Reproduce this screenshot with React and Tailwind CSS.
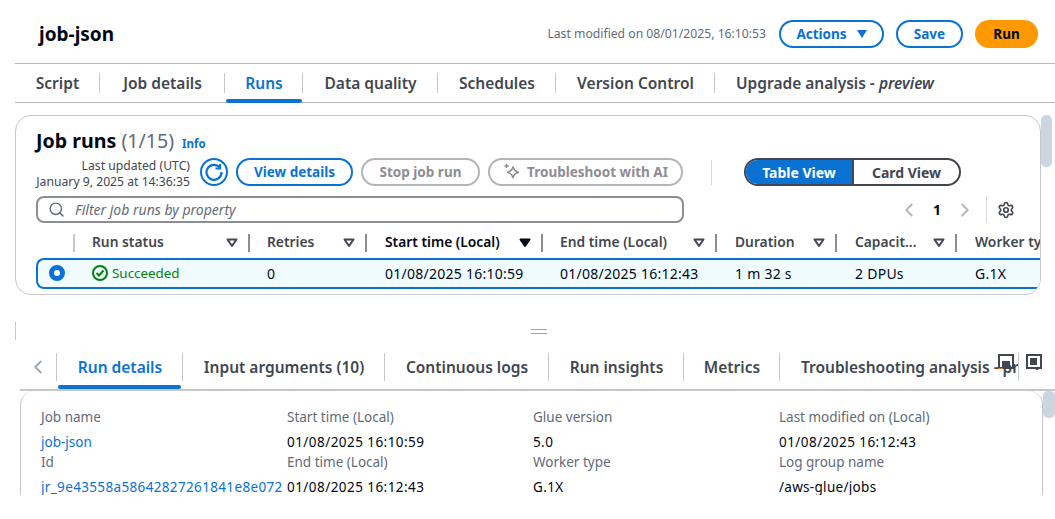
import { Search, Settings, ChevronLeft, ChevronRight } from 'lucide-react';

const topTabs = [
  { label: 'Script', width: 'w-[85px]' },
  { label: 'Job details', width: 'w-[125px]' },
  { label: 'Runs', width: 'w-[78px]', active: true },
  { label: 'Data quality', width: 'w-[135px]' },
  { label: 'Schedules', width: 'w-[118px]' },
  { label: 'Version Control', width: 'w-[159px]' },
];

const bottomTabs = [
  { label: 'Run details', width: 'w-[126px]', active: true },
  { label: 'Input arguments (10)', width: 'w-[202px]' },
  { label: 'Continuous logs', width: 'w-[164px]' },
  { label: 'Run insights', width: 'w-[135px]' },
  { label: 'Metrics', width: 'w-[96px]' },
];

const columns = [
  { label: 'Run status', width: 'w-[175px]', pad: 'pl-[17px]' },
  { label: 'Retries', width: 'w-[117px]', pad: 'pl-[17px]' },
  { label: 'Start time (Local)', width: 'w-[176px]', pad: 'pl-[18px]', sorted: true },
  { label: 'End time (Local)', width: 'w-[174px]', pad: 'pl-[17px]' },
  { label: 'Duration', width: 'w-[120px]', pad: 'pl-[18px]' },
  { label: 'Capacit...', width: 'w-[120px]', pad: 'pl-[18px]' },
];

const details = [
  [
    { label: 'Job name', value: 'job-json', className: 'text-[#0972d3]' },
    { label: 'Id', value: 'jr_9e43558a58642827261841e8e072', className: 'text-[#0972d3] tracking-[0.35px]' },
  ],
  [
    { label: 'Start time (Local)', value: '01/08/2025 16:10:59', className: 'tracking-[0.45px]' },
    { label: 'End time (Local)', value: '01/08/2025 16:12:43', className: 'tracking-[0.45px]' },
  ],
  [
    { label: 'Glue version', value: '5.0', className: 'tracking-[0.4px]' },
    { label: 'Worker type', value: 'G.1X', className: 'tracking-[0.4px]' },
  ],
  [
    { label: 'Last modified on (Local)', value: '01/08/2025 16:12:43', className: 'tracking-[0.45px]' },
    { label: 'Log group name', value: '/aws-glue/jobs', className: 'tracking-[0.3px]' },
  ],
];

function Caret({ filled }) {
  return (
    <svg width="12" height="10" viewBox="0 0 12 10" className="shrink-0">
      <path
        d="M1.5 1.5h9L6 8z"
        fill={filled ? '#000716' : 'none'}
        stroke={filled ? '#000716' : '#424650'}
        strokeWidth="2"
        strokeLinejoin="round"
      />
    </svg>
  );
}

function PopBottomIcon() {
  return (
    <svg width="16" height="16" viewBox="0 0 16 16" className="shrink-0">
      <rect x="1" y="1" width="14" height="13" fill="none" stroke="#424650" strokeWidth="2" />
      <rect x="4" y="7" width="8" height="6" fill="#424650" />
      <path d="M0 14.5h5" stroke="#e07941" strokeWidth="1" />
    </svg>
  );
}

function PopSideIcon() {
  return (
    <svg width="16" height="16" viewBox="0 0 16 16" className="shrink-0">
      <rect x="1" y="1" width="14" height="13" fill="none" stroke="#424650" strokeWidth="2" />
      <rect x="4" y="4" width="7" height="7" fill="#424650" />
      <path d="M10 16l5-3" stroke="#424650" strokeWidth="1.5" />
    </svg>
  );
}

function TabBar({ tabs, height }) {
  return tabs.map((tab) => (
    <div
      key={tab.label}
      className={`${tab.width} ${height} shrink-0 pl-[1px] flex items-center justify-center`}
    >
      <span className={`h-[20px] leading-[20px] text-[15.5px] font-semibold whitespace-nowrap ${tab.active ? 'text-[#0972d3]' : 'text-[#414750]'}`}>
        {tab.label}
      </span>
    </div>
  ));
}

export default function App() {
  return (
    <div className="w-[1055px] h-[519px] overflow-hidden bg-white font-['Noto_Sans',sans-serif] text-[#000716]">
      <header className="h-[63px] pt-[5px] pl-[39px] pr-[17px] flex items-center">
        <h1 className="text-[19px] font-bold">job-json</h1>
        <span className="ml-auto text-[12.2px] text-[#5f6b7a]">Last modified on 08/01/2025, 16:10:53</span>
        <button className="ml-[13px] w-[105px] h-[28px] rounded-full border-2 border-[#0972d3] text-[#0972d3] text-[13.5px] font-bold flex items-center justify-center gap-[10px]">
          Actions
          <svg width="10" height="8" viewBox="0 0 10 8"><path d="M0 0h10L5 8z" fill="#0972d3" /></svg>
        </button>
        <button className="ml-[12px] w-[67px] h-[28px] rounded-full border-2 border-[#0972d3] text-[#0972d3] text-[13.5px] font-bold">Save</button>
        <button className="ml-[12px] w-[63px] h-[28px] rounded-full bg-[#ff9900] text-[13.5px] font-bold">Run</button>
      </header>

      <nav className="ml-[15px] h-[40px] border-y border-[#b4bbbb] flex items-center relative">
        <div className="flex items-center divide-x divide-[#c6c6cd]">
          <TabBar tabs={topTabs} height="h-[20px]" />
          <div className="h-[20px] pl-[21px] text-[15.5px] leading-[20px] font-semibold text-[#414750] whitespace-nowrap">
            Upgrade analysis - <em>preview</em>
          </div>
        </div>
        <div className="absolute left-[211px] bottom-[-1px] w-[76px] h-[4px] rounded-full bg-[#0972d3]" />
      </nav>

      <div className="flex mt-[12px] ml-[15px]">
        <section className="w-[1026px] h-[180px] rounded-[16px] border border-[#c6c6cd] overflow-hidden pl-[20px] pt-[10px]">
          <div className="flex items-baseline h-[28px]">
            <h2 className="text-[19.6px] font-bold">Job runs <span className="font-normal text-[#5f6b7a]">(1/15)</span></h2>
            <a className="ml-[8px] text-[11.5px] font-bold text-[#0972d3]">Info</a>
          </div>

          <div className="flex items-center h-[30px] mt-[3px]">
            <div className="w-[154px] pt-[4px] text-right text-[12.2px] leading-[16px] text-[#414750] whitespace-nowrap">
              <div>Last updated (UTC)</div>
              <div>January 9, 2025 at 14:36:35</div>
            </div>
            <button className="ml-[10px] w-[28px] h-[28px] rounded-full border-2 border-[#0972d3] flex items-center justify-center">
              <svg width="18" height="18" viewBox="0 0 18 18" fill="none" stroke="#0972d3" strokeWidth="2.2">
                <path d="M14.5 4.2A7.5 7.5 0 1 0 16.5 9" />
                <path d="M15 1v4.5h-4.5" />
              </svg>
            </button>
            <button className="ml-[8px] w-[117px] h-[28px] rounded-full border-2 border-[#0972d3] text-[#0972d3] text-[13.5px] font-bold">View details</button>
            <button className="ml-[8px] w-[119px] h-[28px] rounded-full border-2 border-[#b4b4bb] text-[#8d8d94] text-[13.5px] font-bold">Stop job run</button>
            <button className="ml-[8px] w-[195px] h-[28px] rounded-full border-2 border-[#b4b4bb] text-[#8d8d94] text-[13.5px] font-bold flex items-center justify-center gap-[6px]">
              <svg width="18" height="18" viewBox="0 0 18 18" fill="none" stroke="#8d8d94" strokeWidth="1.5">
                <path d="M10 3.5c.7 3.6 2.2 5 5.8 5.8-3.6.8-5.1 2.2-5.8 5.8-.7-3.6-2.2-5-5.8-5.8 3.6-.8 5.1-2.2 5.8-5.8z" />
                <path d="M3.5 1v4M1.5 3h4" />
              </svg>
              Troubleshoot with AI
            </button>
            <div className="ml-[28px] w-px h-[25px] bg-[#d5dbdb]" />
            <div className="ml-[32px] w-[217px] h-[28px] rounded-full border-2 border-[#424650] overflow-hidden flex text-[14px] font-bold">
              <span className="w-[108px] bg-[#0972d3] text-white border-r-2 border-[#424650] flex items-center justify-center">Table View</span>
              <span className="flex-1 text-[#414750] flex items-center justify-center">Card View</span>
            </div>
          </div>

          <div className="flex items-center h-[27px] mt-[9px]">
            <div className="w-[648px] h-[27px] rounded-[8px] border-2 border-[#8c8c94] flex items-center pl-[10px] gap-[10px] text-[14px] italic text-[#5f6b7a]">
              <Search size={17} strokeWidth={2} className="text-[#5f6b7a]" />
              Filter job runs by property
            </div>
            <ChevronLeft size={22} className="ml-[214px] text-[#b4b4bb]" />
            <span className="ml-[13px] text-[14px] font-bold">1</span>
            <ChevronRight size={22} className="ml-[13px] text-[#b4b4bb]" />
            <div className="ml-[10px] w-px h-[27px] bg-[#d5dbdb]" />
            <Settings size={18} strokeWidth={2.2} className="ml-[10px] text-[#414750]" />
          </div>

          <div className="flex items-center h-[21px] mt-[9px] whitespace-nowrap">
            <div className="w-[39px] shrink-0 h-[18px] border-r-2 border-[#c6c6cd]" />
            {columns.map((col) => (
              <div
                key={col.label}
                className={`${col.width} ${col.pad} shrink-0 h-[18px] pr-[10px] border-r-2 border-[#8c8c94] flex items-center justify-between text-[13.8px] font-semibold ${col.sorted ? 'text-[#000716]' : 'text-[#414750]'}`}
              >
                {col.label}
                <Caret filled={col.sorted} />
              </div>
            ))}
            <div className="pl-[18px] text-[13.8px] font-semibold text-[#414750]">Worker type</div>
          </div>

          <div className="mt-[5px] h-[31px] rounded-l-[8px] border-2 border-r-0 border-[#0972d3] bg-[#f0fbff] flex items-center whitespace-nowrap text-[14px] tracking-[0.26px] text-[#000716]">
            <div className="w-[37px] shrink-0 pl-[11px] pb-[2px]">
              <div className="w-[16px] h-[16px] rounded-full border-[5px] border-[#0972d3] bg-white" />
            </div>
            <div className="w-[175px] shrink-0 pl-[17px] flex items-center gap-[4px] text-[13.4px] tracking-normal text-[#037f0c]">
              <svg width="16" height="16" viewBox="0 0 16 16" fill="none" stroke="#037f0c" strokeWidth="2">
                <circle cx="8" cy="8" r="7" />
                <path d="M4.5 8l2.5 2.5 4.5-5" />
              </svg>
              Succeeded
            </div>
            <div className="w-[117px] shrink-0 pl-[17px]">0</div>
            <div className="w-[176px] shrink-0 pl-[18px]">01/08/2025 16:10:59</div>
            <div className="w-[174px] shrink-0 pl-[17px]">01/08/2025 16:12:43</div>
            <div className="w-[120px] shrink-0 pl-[18px]">1 m 32 s</div>
            <div className="w-[120px] shrink-0 pl-[18px]">2 DPUs</div>
            <div className="pl-[18px]">G.1X</div>
          </div>
        </section>
        <div className="w-[11px] h-[52px] rounded-[5px] bg-[#ccd6e0]" />
      </div>

      <div className="mt-[27px] ml-[15px] h-[18px] border-l border-[#c6c6cd] flex items-center">
        <div className="ml-[515px] w-[16px] h-[5px] border-y border-[#9ba7b6]" />
      </div>

      <nav className="relative mt-[13px] ml-[20px] h-[38px] border-b-2 border-[#c6c6cd] flex items-start">
        <div className="w-[36px] h-[28px] flex items-center justify-center">
          <ChevronLeft size={22} className="text-[#9ba7b6] ml-[-1px]" />
        </div>
        <div className="flex items-center divide-x divide-[#c6c6cd] h-[28px] border-x border-[#c6c6cd] overflow-hidden w-[963px]">
          <TabBar tabs={bottomTabs} height="h-[28px]" />
          <div className="h-[28px] pl-[21px] text-[15.5px] leading-[28px] font-semibold text-[#414750] whitespace-nowrap">
            Troubleshooting analysis - preview
          </div>
        </div>
        <div className="absolute left-[38px] bottom-0 w-[123px] h-[4px] rounded-full bg-[#0972d3]" />
        <div className="absolute right-[13px] top-[1px] flex gap-[12px]">
          <PopBottomIcon />
          <PopSideIcon />
        </div>
      </nav>

      <div className="flex ml-[20px]">
        <section className="w-[1023px] h-[104px] rounded-t-[14px] border-x border-[#c6c6cd] overflow-hidden pl-[20px] pt-[16px] grid grid-cols-[246px_246px_246px_1fr] text-[13.5px]">
          {details.map((col) => (
            <div key={col[0].label}>
              {col.map((item) => (
                <div key={item.label} className="h-[45px]">
                  <div className="h-[20px] leading-[20px] text-[#5f6b7a]">{item.label}</div>
                  <div className={`mt-[5px] h-[20px] leading-[20px] whitespace-nowrap ${item.className}`}>{item.value}</div>
                </div>
              ))}
            </div>
          ))}
        </section>
        <div className="w-[12px] h-[27px] rounded-[5px] bg-[#ccd6e0]" />
      </div>
    </div>
  );
}
